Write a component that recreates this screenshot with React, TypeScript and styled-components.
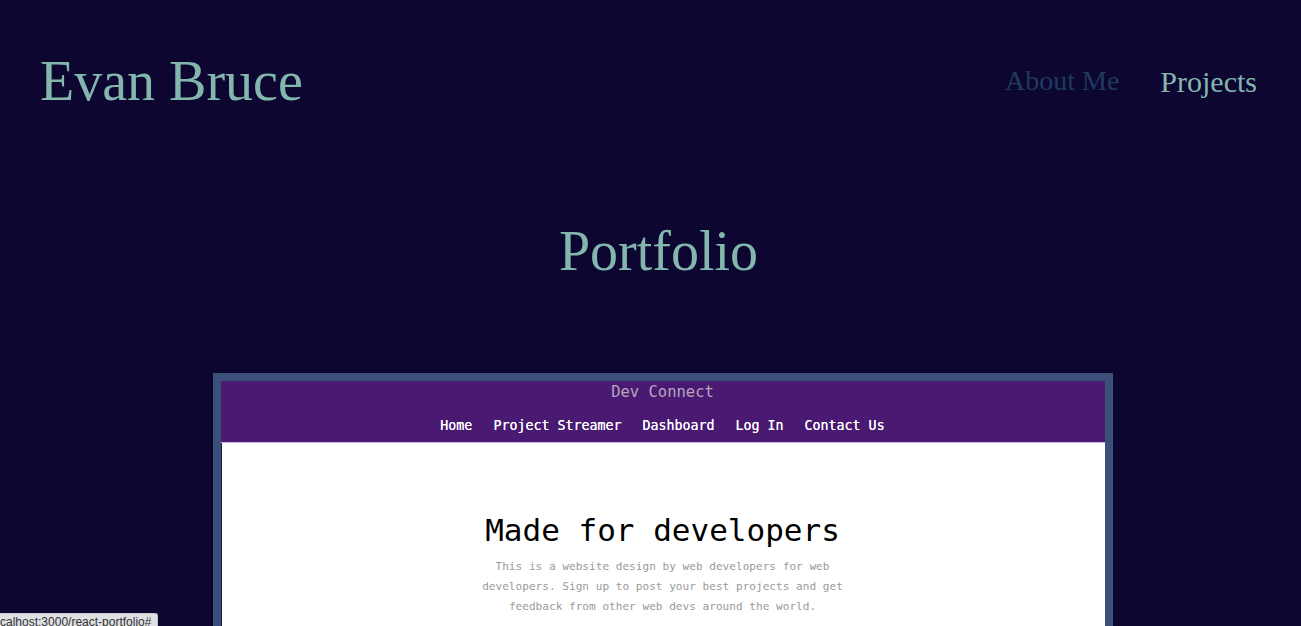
import React from "react";
import styled, { createGlobalStyle } from "styled-components";

const Global = createGlobalStyle`
  html, body { margin: 0; padding: 0; background: #0c0631; }
  body { font-family: "Liberation Serif", serif; overflow: hidden; }
`;

const Page = styled.div`
  min-height: 626px;
  background: #0c0631;
`;

const Header = styled.header`
  display: flex;
  justify-content: space-between;
  align-items: flex-end;
  padding: 44px 44px 0 40px;
  height: 86px;
  box-sizing: content-box;
`;

const Brand = styled.h1`
  margin: 0 0 11px;
  font-family: "Liberation Serif", serif;
  font-weight: 400;
  font-size: 56px;
  line-height: 76px;
  color: #83b6ad;
`;

const Nav = styled.nav`
  display: flex;
  gap: 41px;
  padding-bottom: 31px;
`;

const NavLink = styled.a<{ $active?: boolean }>`
  font-family: "Liberation Serif", serif;
  font-size: ${(p) => (p.$active ? 30 : 28)}px;
  color: ${(p) => (p.$active ? "#83b6ad" : "#1f3a5e")};
  text-decoration: none;
`;

const Title = styled.h2`
  margin: 83px 0 0;
  padding-left: 16px;
  text-align: center;
  font-family: "Liberation Serif", serif;
  font-weight: 400;
  font-size: 56px;
  line-height: 76px;
  color: #83b6ad;
`;

const Showcase = styled.section`
  padding-left: 24px;
  margin-top: 84px;
`;

const Frame = styled.div`
  width: 884px;
  margin: 0 auto;
  border: 8px solid #3a5078;
  border-bottom: none;
  background: #fff;
  box-shadow: inset 1px 1px 0 #1a1a3a;
`;

const MockNav = styled.div`
  background: #4a1a72;
  display: flex;
  flex-direction: column;
  align-items: center;
  height: 62px;
  border-bottom: 1px solid #c9b8e0;
  box-sizing: border-box;
`;

const MockBrand = styled.div`
  font-family: "DejaVu Sans Mono", monospace;
  font-size: 15.5px;
  color: #b5a6bd;
  margin-top: 1px;
  line-height: 20px;
`;

const MockLinks = styled.div`
  display: flex;
  gap: 21px;
  margin-top: 16px;
`;

const MockLink = styled.span`
  font-family: "DejaVu Sans Mono", monospace;
  font-size: 13.3px;
  font-weight: 500;
  color: #ffffff;
  line-height: 16px;
  text-shadow: 0 0 0.4px #fff;
`;

const Hero = styled.div`
  display: flex;
  flex-direction: column;
  align-items: center;
  padding-top: 65px;
  height: 200px;
`;

const HeroTitle = styled.div`
  font-family: "DejaVu Sans Mono", monospace;
  font-size: 31px;
  color: #000;
  line-height: 44px;
`;

const HeroText = styled.p`
  margin: 5px 0 0;
  width: 380px;
  text-align: center;
  font-family: "DejaVu Sans Mono", monospace;
  font-size: 11.1px;
  line-height: 20px;
  color: #9a9a9a;
`;

const Status = styled.div`
  position: fixed;
  left: 0;
  bottom: 0;
  height: 12px;
  padding: 0 6px 0 0;
  background: #dfe1e5;
  border: 1px solid #c8c8c8;
  border-left: none;
  border-bottom: none;
  border-top-right-radius: 3px;
  font-family: "Liberation Sans", sans-serif;
  font-size: 12px;
  line-height: 16px;
  color: #333;
  overflow: hidden;
  white-space: nowrap;
`;

export default function App() {
  return (
    <Page>
      <Global />
      <Header>
        <Brand>Evan Bruce</Brand>
        <Nav>
          <NavLink href="#">About Me</NavLink>
          <NavLink href="#" $active>
            Projects
          </NavLink>
        </Nav>
      </Header>
      <Title>Portfolio</Title>
      <Showcase>
        <Frame>
          <MockNav>
            <MockBrand>Dev Connect</MockBrand>
            <MockLinks>
              <MockLink>Home</MockLink>
              <MockLink>Project Streamer</MockLink>
              <MockLink>Dashboard</MockLink>
              <MockLink>Log In</MockLink>
              <MockLink>Contact Us</MockLink>
            </MockLinks>
          </MockNav>
          <Hero>
            <HeroTitle>Made for developers</HeroTitle>
            <HeroText>
              This is a website design by web developers for web developers. Sign up to post your
              best projects and get feedback from other web devs around the world.
            </HeroText>
          </Hero>
        </Frame>
      </Showcase>
      <Status>calhost:3000/react-portfolio#</Status>
    </Page>
  );
}
